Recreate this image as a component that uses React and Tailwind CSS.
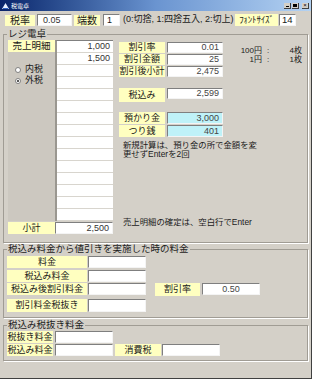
import React from "react";

const Lbl = ({ children, className = "" }) => (
  <div className={`flex items-center justify-center bg-[#ffffc0] leading-none whitespace-nowrap ${className}`}>
    {children}
  </div>
);

const Box = ({ children, className = "" }) => (
  <div
    className={`flex items-center leading-none border border-[#f4f4f4] border-t-[#7f7f7f] border-l-[#7f7f7f] ${className}`}
  >
    {children}
  </div>
);

const Group = ({ title, className = "", children }) => (
  <fieldset className={`mx-[3px] border border-[#a09c94] shadow-[1px_1px_0_#ffffff] ${className}`}>
    <legend className="ml-[3px] px-px text-[9.5px] leading-[10px] text-[#222]">{title}</legend>
    {children}
  </fieldset>
);

function Radio({ checked, label }) {
  return (
    <div className="flex items-center h-[11px]">
      <div className="w-[6px] h-[6px] rounded-full bg-white border border-[#808080] flex items-center justify-center">
        {checked && <div className="w-[2px] h-[2px] rounded-full bg-[#222]" />}
      </div>
      <span className="ml-[4px] leading-none">{label}</span>
    </div>
  );
}

function App() {
  const sales = ["1,000", "1,500", "", "", "", "", "", "", "", "", "", "", "", "", ""];

  return (
    <div className="w-[312px] h-[379px] bg-[#d4d0c8] overflow-hidden text-[9px] text-[#1a1a1a] font-['Liberation_Sans','Noto_Sans_CJK_JP',sans-serif] border-r border-b border-r-[#404040] border-b-[#404040]">
      {/* title bar */}
      <div className="h-[11px] flex items-center bg-gradient-to-r from-[#0a246a] via-[#6a94d0] to-[#b4d2f2] px-[2px]">
        <svg width="7" height="6" viewBox="0 0 7 6">
          <path d="M0 6 L3.5 0 L7 6 Z" fill="#e8f0ff" />
          <path d="M1 5.5 L6 5.5" stroke="#3060c0" strokeWidth="1" />
        </svg>
        <span className="ml-[2px] text-[6px] leading-none text-white">税電卓</span>
        <div className="ml-auto flex items-center gap-px">
          <div className="w-[7px] h-[6px] bg-[#d4d0c8] border-r border-b border-[#404040] flex items-end justify-center">
            <div className="w-[3px] h-px bg-black mb-px" />
          </div>
          <div className="w-[7px] h-[6px] bg-[#d4d0c8] border-r border-b border-[#404040] mr-[2px] flex items-center justify-center">
            <div className="w-[4px] h-[3px] border border-black border-t-2" />
          </div>
          <div className="w-[7px] h-[6px] bg-[#d4d0c8] border-r border-b border-[#404040] flex items-center justify-center text-[6px] leading-none text-black">
            ×
          </div>
        </div>
      </div>

      {/* top row */}
      <div className="mt-[3px] h-[12px] flex items-stretch pl-[5px]">
        <Lbl className="w-[30px] mt-px text-[10px]">税率</Lbl>
        <Box className="ml-[2px] w-[35px] bg-white pl-[5px] text-[#333]">0.05</Box>
        <Lbl className="ml-[2px] w-[26px] mt-px text-[10px]">端数</Lbl>
        <Box className="ml-[3px] w-[17px] bg-white pl-[3px]">1</Box>
        <div className="ml-[3px] w-[110px] flex items-center whitespace-nowrap text-[9px]">
          (0:切捨, 1:四捨五入, 2:切上)
        </div>
        <Lbl className="ml-[2px] w-[43px] text-[9px] tracking-[-0.2px]">ﾌｫﾝﾄｻｲｽﾞ</Lbl>
        <Box className="ml-px w-[17px] bg-white pl-[2px] text-[9.5px]">14</Box>
      </div>

      {/* register group */}
      <Group title="レジ電卓" className="mt-[3px] h-[214px]">
        <div className="flex pl-[4px] pt-px">
          {/* sales list */}
          <div className="w-[105px] flex flex-col">
            <div className="flex">
              <div className="w-[47px] flex flex-col">
                <Lbl className="h-[12px] text-[9.5px]">売上明細</Lbl>
                <div className="flex-1 bg-[#ccc8c0] pl-[7px] pt-[12px] flex flex-col">
                  <Radio label="内税" />
                  <Radio checked label="外税" />
                </div>
              </div>
              <div className="w-[58px] flex flex-col border-l-2 border-l-[#9a9790] border-t border-t-[#808080]">
                {sales.map((v, i) => (
                  <div
                    key={i}
                    className="h-[12px] bg-white border-b border-[#d8d5ce] flex items-center justify-end pr-[3px] leading-none text-[#333]"
                  >
                    {v}
                  </div>
                ))}
              </div>
            </div>
            <div className="flex mt-px h-[12px]">
              <Lbl className="w-[47px]">小計</Lbl>
              <Box className="w-[58px] bg-white justify-end pr-[3px] text-[#333]">2,500</Box>
            </div>
          </div>

          {/* discount / payment */}
          <div className="ml-[6px] w-[104px] flex flex-col pt-[2px]">
            <div className="flex h-[11px]">
              <Lbl className="w-[46px]">割引率</Lbl>
              <Box className="ml-[2px] w-[56px] bg-white justify-end pr-[3px] text-[#444]">0.01</Box>
            </div>
            <div className="flex h-[11px] mt-px">
              <Lbl className="w-[46px]">割引金額</Lbl>
              <Box className="ml-[2px] w-[56px] bg-white justify-end pr-[3px] text-[#444]">25</Box>
            </div>
            <div className="flex h-[11px] mt-px">
              <Lbl className="w-[46px]">割引後小計</Lbl>
              <Box className="ml-[2px] w-[56px] bg-white justify-end pr-[3px] text-[#444]">2,475</Box>
            </div>
            <div className="flex mt-[11px]">
              <Lbl className="w-[46px] h-[14px]">税込み</Lbl>
              <Box className="ml-[2px] w-[56px] h-[11px] bg-white justify-end pr-[3px] text-[#444]">2,599</Box>
            </div>
            <div className="flex h-[12px] mt-[10px]">
              <Lbl className="w-[46px]">預かり金</Lbl>
              <Box className="ml-[2px] w-[56px] bg-[#bff2f8] justify-end pr-[3px] text-[#444]">3,000</Box>
            </div>
            <div className="flex h-[12px] mt-px">
              <Lbl className="w-[46px]">つり銭</Lbl>
              <Box className="ml-[2px] w-[56px] bg-[#bff2f8] justify-end pr-[3px] text-[#444]">401</Box>
            </div>
            <p className="mt-[4px] ml-[4px] w-[140px] text-[8.4px] leading-[8.5px] whitespace-nowrap">
              新規計算は、預り金の所で金額を変
              <br />
              更せずEnterを2回
            </p>
            <p className="mt-[60px] ml-[4px] text-[8.4px] leading-[8px] whitespace-nowrap">
              売上明細の確定は、空白行でEnter
            </p>
          </div>

          {/* coin breakdown */}
          <div className="ml-[15px] pt-[6px] text-[8px] leading-[9px]">
            <div className="flex">
              <span className="w-[24px] text-right">100円</span>
              <span className="ml-[5px] w-[4px]">:</span>
              <span className="w-[31px] text-right">4枚</span>
            </div>
            <div className="flex">
              <span className="w-[24px] text-right">1円</span>
              <span className="ml-[5px] w-[4px]">:</span>
              <span className="w-[31px] text-right">1枚</span>
            </div>
          </div>
        </div>
      </Group>

      {/* discount on tax-included price */}
      <Group title="税込み料金から値引きを実施した時の料金" className="mt-px h-[74px]">
        <div className="flex pl-[3px] pt-[2px]">
          <div className="flex flex-col w-[139px]">
            <div className="flex h-[12px]">
              <Lbl className="w-[80px]">料金</Lbl>
              <Box className="ml-px w-[58px] bg-white" />
            </div>
            <div className="flex h-[12px] mt-[2px]">
              <Lbl className="w-[80px]">税込み料金</Lbl>
              <Box className="ml-px w-[58px] bg-white" />
            </div>
            <div className="flex h-[12px] mt-px">
              <Lbl className="w-[80px]">税込み後割引料金</Lbl>
              <Box className="ml-px w-[58px] bg-white" />
            </div>
            <div className="flex h-[13px] mt-[4px]">
              <Lbl className="w-[80px]">割引料金税抜き</Lbl>
              <Box className="ml-px w-[58px] bg-white" />
            </div>
          </div>
          <div className="ml-[9px] mt-[27px] flex h-[13px]">
            <Lbl className="w-[45px]">割引率</Lbl>
            <Box className="ml-[2px] w-[58px] h-[12px] bg-white justify-center text-[#444]">0.50</Box>
          </div>
        </div>
      </Group>

      {/* tax-included / excluded */}
      <Group title="税込み税抜き料金" className="mt-[2px] h-[41px]">
        <div className="flex flex-col pl-[3px] pt-[1px]">
          <div className="flex h-[12px]">
            <Lbl className="w-[46px]">税抜き料金</Lbl>
            <Box className="ml-[2px] w-[58px] bg-white" />
          </div>
          <div className="flex h-[12px] mt-px">
            <Lbl className="w-[46px]">税込み料金</Lbl>
            <Box className="ml-[2px] w-[58px] bg-white" />
            <Lbl className="ml-[2px] w-[46px]">消費税</Lbl>
            <Box className="ml-px w-[58px] bg-white" />
          </div>
        </div>
      </Group>
    </div>
  );
}

export default App;
